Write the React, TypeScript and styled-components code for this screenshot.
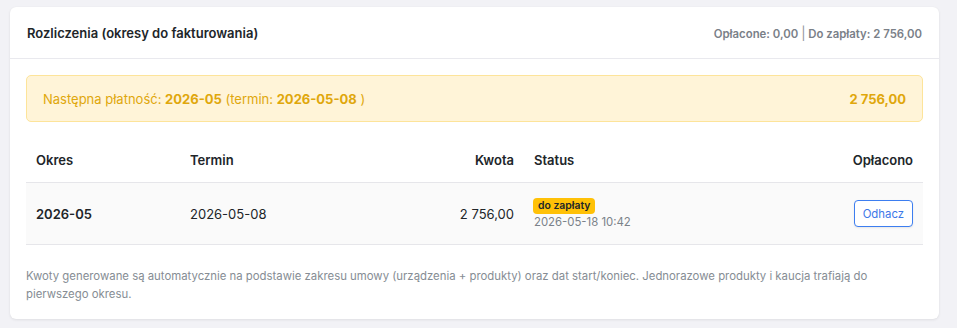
import React from "react";
import styled, { createGlobalStyle } from "styled-components";

const Global = createGlobalStyle`
  html, body { margin: 0; padding: 0; background: #f2f2f6; }
  body { font-family: Inter, "Noto Sans", sans-serif; color: #212529; }
  * { box-sizing: border-box; }
`;

const Page = styled.div`
  padding: 7px 18px 10px 10px;
`;

const Card = styled.div`
  background: #fff;
  border-radius: 6px;
  box-shadow: 0 1px 3px rgba(0, 0, 0, 0.08), 0 0 1px rgba(0, 0, 0, 0.05);
`;

const Header = styled.div`
  display: flex;
  align-items: center;
  justify-content: space-between;
  height: 52px;
  padding: 0 17px 0 17px;
  border-bottom: 1px solid #e9e9ee;
`;

const Title = styled.h3`
  margin: 0;
  font-size: 13px;
  font-weight: 600;
  color: #212529;
`;

const Summary = styled.div`
  font-size: 11.375px;
  font-weight: 600;
  color: #7a8088;
`;

const Sep = styled.span`
  color: #8e949a;
  font-weight: 400;
  font-size: 13px;
`;

const Body = styled.div`
  padding: 16px 16px 16px 16px;
`;

const Alert = styled.div`
  display: flex;
  align-items: center;
  justify-content: space-between;
  height: 47px;
  padding: 0 16px;
  background: #fff4d8;
  border: 1px solid #fde49a;
  border-radius: 5px;
  color: #e0a70c;
  font-size: 13px;
`;

const Strong = styled.strong`
  font-weight: 700;
`;

const Table = styled.div`
  margin-top: 16px;
  display: grid;
  grid-template-columns: 154px 164px 180px 1fr 130px;
`;

const Cell = styled.div<{ $align?: "left" | "right"; $head?: boolean; $bold?: boolean }>`
  display: flex;
  flex-direction: column;
  justify-content: center;
  align-items: ${(p) => (p.$align === "right" ? "flex-end" : "flex-start")};
  padding: 0 10px;
  font-size: 13px;
  font-weight: ${(p) => (p.$head || p.$bold ? 600 : 400)};
  color: #212529;
  height: ${(p) => (p.$head ? "45px" : "62px")};
  border-bottom: 1px solid #e6e6ea;
  background: ${(p) => (p.$head ? "#fff" : "#fafafa")};
`;

const Badge = styled.span`
  display: inline-block;
  background: #ffc107;
  color: #212529;
  font-size: 10.4px;
  font-weight: 600;
  line-height: 16px;
  padding: 0 5px;
  margin-left: -1px;
  border-radius: 4px;
`;

const Stamp = styled.div`
  margin-top: 1px;
  font-size: 11.375px;
  color: #7b8289;
`;

const Button = styled.button`
  font-family: inherit;
  font-size: 11.375px;
  color: #3d79e8;
  background: #fff;
  border: 1px solid #3d7ef0;
  border-radius: 4px;
  height: 27px;
  padding: 0 8px;
  margin-right: 0;
  box-shadow: 0 1px 2px rgba(0, 0, 0, 0.08);
`;

const Note = styled.p`
  margin: 22px 0 0 0;
  font-size: 11.375px;
  line-height: 18px;
  color: #868d94;
`;

export default function App() {
  return (
    <>
      <Global />
      <Page>
        <Card>
          <Header>
            <Title>Rozliczenia (okresy do fakturowania)</Title>
            <Summary>
              Opłacone: 0,00 <Sep>|</Sep> Do zapłaty: 2 756,00
            </Summary>
          </Header>
          <Body>
            <Alert>
              <span>
                Następna płatność: <Strong>2026-05</Strong> (termin: <Strong>2026-05-08</Strong> )
              </span>
              <Strong>2 756,00</Strong>
            </Alert>
            <Table>
              <Cell $head>Okres</Cell>
              <Cell $head>Termin</Cell>
              <Cell $head $align="right">Kwota</Cell>
              <Cell $head>Status</Cell>
              <Cell $head $align="right">Opłacono</Cell>

              <Cell $bold>2026-05</Cell>
              <Cell>2026-05-08</Cell>
              <Cell $align="right">2 756,00</Cell>
              <Cell>
                <Badge>do zapłaty</Badge>
                <Stamp>2026-05-18 10:42</Stamp>
              </Cell>
              <Cell $align="right">
                <Button>Odhacz</Button>
              </Cell>
            </Table>
            <Note>
              Kwoty generowane są automatycznie na podstawie zakresu umowy (urządzenia + produkty) oraz dat start/koniec. Jednorazowe produkty i kaucja trafiają do pierwszego okresu.
            </Note>
          </Body>
        </Card>
      </Page>
    </>
  );
}
